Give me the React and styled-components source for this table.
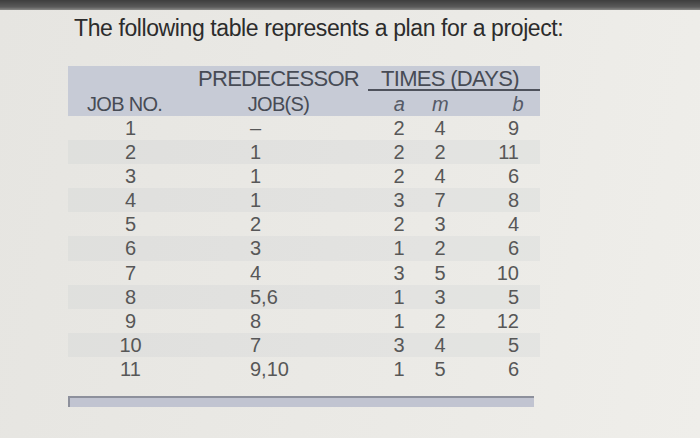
import styled, { createGlobalStyle } from "styled-components"

const GlobalStyle = createGlobalStyle`
  html, body {
    margin: 0;
    padding: 0;
    background: #e8e7e3;
  }
  body {
    font-family: "Liberation Sans", Arial, sans-serif;
  }
`;

const jobs = [
  { no: "1", pred: "–", a: 2, m: 4, b: 9 },
  { no: "2", pred: "1", a: 2, m: 2, b: 11 },
  { no: "3", pred: "1", a: 2, m: 4, b: 6 },
  { no: "4", pred: "1", a: 3, m: 7, b: 8 },
  { no: "5", pred: "2", a: 2, m: 3, b: 4 },
  { no: "6", pred: "3", a: 1, m: 2, b: 6 },
  { no: "7", pred: "4", a: 3, m: 5, b: 10 },
  { no: "8", pred: "5,6", a: 1, m: 3, b: 5 },
  { no: "9", pred: "8", a: 1, m: 2, b: 12 },
  { no: "10", pred: "7", a: 3, m: 4, b: 5 },
  { no: "11", pred: "9,10", a: 1, m: 5, b: 6 },
];

export default function App() {
  return (
    <Page>
      <GlobalStyle />
      <TopEdge />
      <Title>The following table represents a plan for a project:</Title>
      <Table>
        <HeadBand>
          <HeadRow>
            <span />
            <HeadCell>PREDECESSOR</HeadCell>
            <TimesCell>TIMES (DAYS)</TimesCell>
          </HeadRow>
          <HeadRow $low>
            <JobHead>JOB NO.</JobHead>
            <HeadCell>JOB(S)</HeadCell>
            <VarCell>a</VarCell>
            <VarCell>m</VarCell>
            <VarCell $right>b</VarCell>
          </HeadRow>
        </HeadBand>
        {jobs.map((job, i) => (
          <Row key={job.no} $striped={i % 2 === 1}>
            <NumCell>{job.no}</NumCell>
            <PredCell>{job.pred}</PredCell>
            <NumCell>{job.a}</NumCell>
            <NumCell>{job.m}</NumCell>
            <NumCell $right>{job.b}</NumCell>
          </Row>
        ))}
      </Table>
      <BottomBar />
    </Page>
  )
};

const Page = styled.div`
  width: 700px;
  height: 438px;
  overflow: hidden;
  background: linear-gradient(100deg, #e6e5e1 0%, #ebeae6 60%, #efeeea 100%);
`;

const TopEdge = styled.div`
  height: 10px;
  background: linear-gradient(180deg, #3e3e3e 0%, #5a5a5a 70%, #8a8a88 100%);
`;

const Title = styled.h1`
  margin: 4px 0 0 74px;
  font-size: 23px;
  line-height: 28px;
  font-weight: 400;
  color: #2c2c2c;
  letter-spacing: -0.4px;
`;

const Table = styled.div`
  width: 472px;
  margin: 24px 0 0 68px;
  color: #575757;
`;

const HeadBand = styled.div`
  background: #c7cbd6;
  color: #474b55;
`;

const cols = "125px 177px 58px 24px 88px";

const HeadRow = styled.div`
  display: grid;
  grid-template-columns: ${cols};
  height: ${p => (p.$low ? 24 : 26)}px;
  font-size: ${p => (p.$low ? 20 : 22)}px;
  line-height: ${p => (p.$low ? 24 : 26)}px;
  letter-spacing: -0.7px;
`;

const HeadCell = styled.div`
  text-align: center;
  padding-right: 6px;
`;

const JobHead = styled.div`
  text-align: left;
  padding-left: 19px;
`;

const TimesCell = styled.div`
  grid-column: span 3;
  text-align: center;
  padding-right: 8px;
  margin-left: -2px;
  height: 23px;
  border-bottom: 2px solid #4e525c;
`;

const VarCell = styled.div`
  font-style: italic;
  text-align: ${p => (p.$right ? "right" : "center")};
  padding-right: ${p => (p.$right ? 17 : 0)}px;
  color: #555a66;
`;

const Row = styled.div`
  display: grid;
  grid-template-columns: ${cols};
  height: 24.1px;
  font-size: 20px;
  line-height: 24px;
  background: ${p => (p.$striped ? "rgba(196, 198, 204, 0.2)" : "transparent")};
`;

const NumCell = styled.div`
  text-align: ${p => (p.$right ? "right" : "center")};
  padding-right: ${p => (p.$right ? 21 : 0)}px;
`;

const PredCell = styled.div`
  padding-left: 57px;
`;

const BottomBar = styled.div`
  width: 464px;
  height: 9px;
  margin: 15px 0 0 68px;
  background: #c1c4d1;
  border-top: 2px solid #8d909c;
  border-left: 2px solid #8d909c;
`;
